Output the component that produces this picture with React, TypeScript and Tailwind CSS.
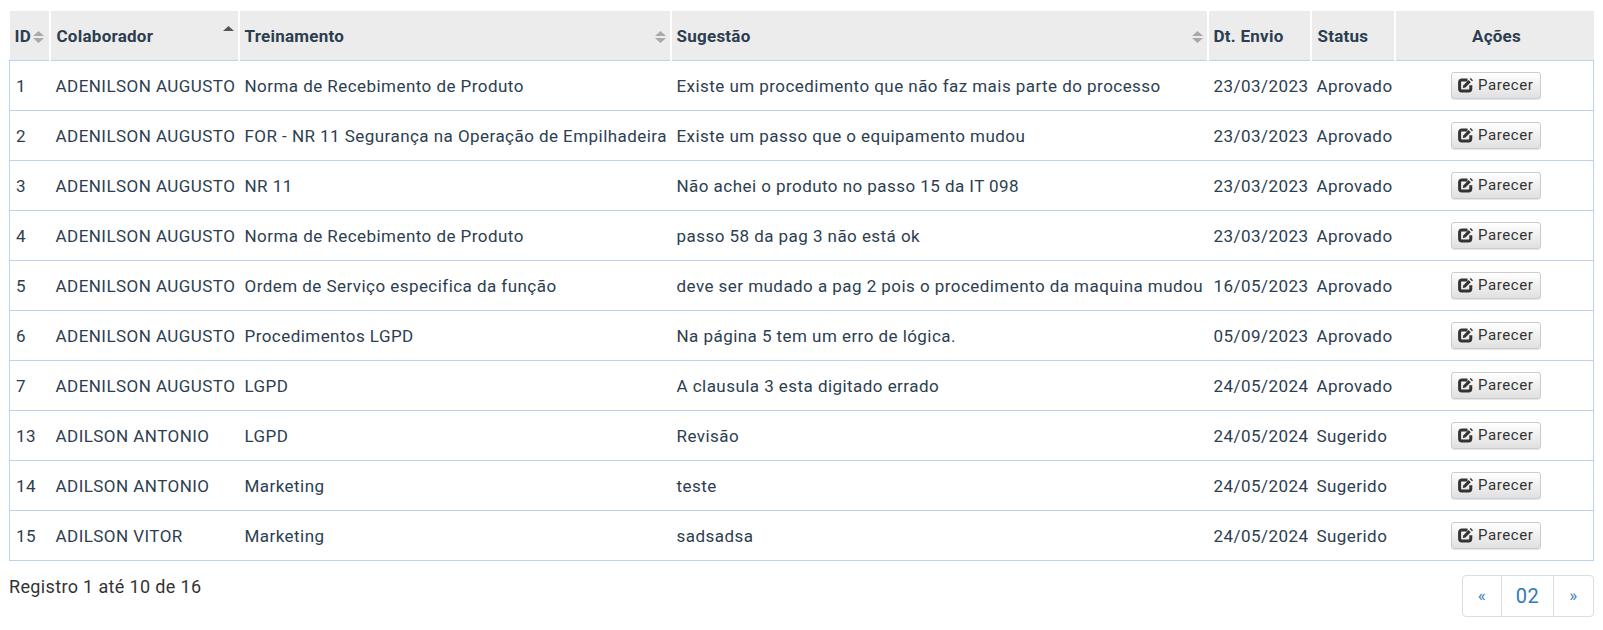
import React from "react";

const rows = [
  ["1", "ADENILSON AUGUSTO", "Norma de Recebimento de Produto", "Existe um procedimento que não faz mais parte do processo", "23/03/2023", "Aprovado"],
  ["2", "ADENILSON AUGUSTO", "FOR - NR 11 Segurança na Operação de Empilhadeira", "Existe um passo que o equipamento mudou", "23/03/2023", "Aprovado"],
  ["3", "ADENILSON AUGUSTO", "NR 11", "Não achei o produto no passo 15 da IT 098", "23/03/2023", "Aprovado"],
  ["4", "ADENILSON AUGUSTO", "Norma de Recebimento de Produto", "passo 58 da pag 3 não está ok", "23/03/2023", "Aprovado"],
  ["5", "ADENILSON AUGUSTO", "Ordem de Serviço especifica da função", "deve ser mudado a pag 2 pois o procedimento da maquina mudou", "16/05/2023", "Aprovado"],
  ["6", "ADENILSON AUGUSTO", "Procedimentos LGPD", "Na página 5 tem um erro de lógica.", "05/09/2023", "Aprovado"],
  ["7", "ADENILSON AUGUSTO", "LGPD", "A clausula 3 esta digitado errado", "24/05/2024", "Aprovado"],
  ["13", "ADILSON ANTONIO", "LGPD", "Revisão", "24/05/2024", "Sugerido"],
  ["14", "ADILSON ANTONIO", "Marketing", "teste", "24/05/2024", "Sugerido"],
  ["15", "ADILSON VITOR", "Marketing", "sadsadsa", "24/05/2024", "Sugerido"],
];

function SortIcon({ asc }: { asc?: boolean }) {
  return (
    <svg width="13" height="16" viewBox="0 0 13 16" className="shrink-0">
      <path d="M1 7 L6.5 2 L12 7 Z" fill={asc ? "#555555" : "#a9a9a9"} />
      {!asc && <path d="M1 9 L6.5 14 L12 9 Z" fill="#a9a9a9" />}
    </svg>
  );
}

function EditIcon() {
  return (
    <svg width="16" height="16" viewBox="0 0 16 16" className="shrink-0">
      <path d="M9.5 3 H3.8 A2.2 2.2 0 0 0 1.6 5.2 V11.8 A2.2 2.2 0 0 0 3.8 14 H10.6 A2.2 2.2 0 0 0 12.8 11.8 V8.2" fill="none" stroke="#333333" strokeWidth="3" />
      <path d="M5.2 8.4 L10.6 3 L12.8 5.2 L7.4 10.6 L4.8 11 Z" fill="#333333" />
      <path d="M11.7 1.9 L12.7 0.9 L15 3.2 L14 4.2 Z" fill="#333333" />
    </svg>
  );
}

export default function App() {
  return (
    <div className="pl-[9px] pr-[10px] pt-[11px] bg-white font-['Roboto',sans-serif] text-[17px] text-[#2c3e50] tracking-[0.45px]">
      <table className="w-[1584px] table-fixed border-collapse">
        <colgroup>
          <col className="w-[40px]" />
          <col className="w-[189px]" />
          <col className="w-[432px]" />
          <col className="w-[537px]" />
          <col className="w-[103px]" />
          <col className="w-[84px]" />
          <col className="w-[199px]" />
        </colgroup>
        <thead>
          <tr className="h-[49px] bg-[#ececec] font-bold text-left text-[17px] tracking-[0.25px]">
            <th className="pl-[5px] pr-0 pt-[3px] border-r-2 border-white">
              <div className="flex items-center gap-[1px]"><span>ID</span><SortIcon /></div>
            </th>
            <th className="pl-[6px] pr-[3px] pt-[3px] border-r-2 border-white">
              <div className="flex items-center justify-between"><span>Colaborador</span><span className="-mt-[10px]"><SortIcon asc /></span></div>
            </th>
            <th className="pl-[5px] pr-[3px] pt-[3px] border-r-2 border-white">
              <div className="flex items-center justify-between"><span>Treinamento</span><SortIcon /></div>
            </th>
            <th className="pl-[5px] pr-[3px] pt-[3px] border-r-2 border-white">
              <div className="flex items-center justify-between"><span>Sugestão</span><SortIcon /></div>
            </th>
            <th className="pl-[5px] pr-0 pt-[3px] border-r-2 border-white">Dt. Envio</th>
            <th className="pl-[6px] pr-0 pt-[3px] border-r-2 border-white">Status</th>
            <th className="pl-[4px] pt-[3px] text-center">Ações</th>
          </tr>
        </thead>
        <tbody>
          {rows.map((r) => (
            <tr key={r[0]} className="h-[50px] border border-[#b8d4f0]">
              <td className="pl-[6px] pt-[4px] whitespace-nowrap">{r[0]}</td>
              <td className="pl-[6px] pt-[4px] whitespace-nowrap">{r[1]}</td>
              <td className="pl-[6px] pt-[4px] whitespace-nowrap">{r[2]}</td>
              <td className="pl-[6px] pt-[4px] whitespace-nowrap">{r[3]}</td>
              <td className="pl-[6px] pt-[4px] whitespace-nowrap">{r[4]}</td>
              <td className="pl-[6px] pt-[4px] whitespace-nowrap">{r[5]}</td>
              <td className="pl-[4px]">
                <div className="flex justify-center">
                  <button className="flex items-center justify-center gap-[4px] w-[90px] h-[27px] rounded-[3px] border border-[#cccccc] bg-gradient-to-b from-white to-[#e0e0e0] text-[15px] tracking-[0.6px] text-[#333333] shadow-[0_1px_1px_rgba(0,0,0,0.1)]">
                    <EditIcon />
                    <span>Parecer</span>
                  </button>
                </div>
              </td>
            </tr>
          ))}
        </tbody>
      </table>
      <div className="flex justify-between mt-[14px] h-[56px]">
        <div className="text-[18px] tracking-[0.35px] text-[#333333] leading-[24px]">Registro 1 até 10 de 16</div>
        <div className="flex h-[42px] border border-[#dddddd] rounded-[4px] text-[#337ab7] -mr-[1px]">
          <div className="w-[39px] flex items-center justify-center text-[17px] border-r border-[#dddddd]">«</div>
          <div className="w-[52px] flex items-center justify-center text-[20px] border-r border-[#dddddd]">02</div>
          <div className="w-[39px] flex items-center justify-center text-[17px]">»</div>
        </div>
      </div>
    </div>
  );
}
